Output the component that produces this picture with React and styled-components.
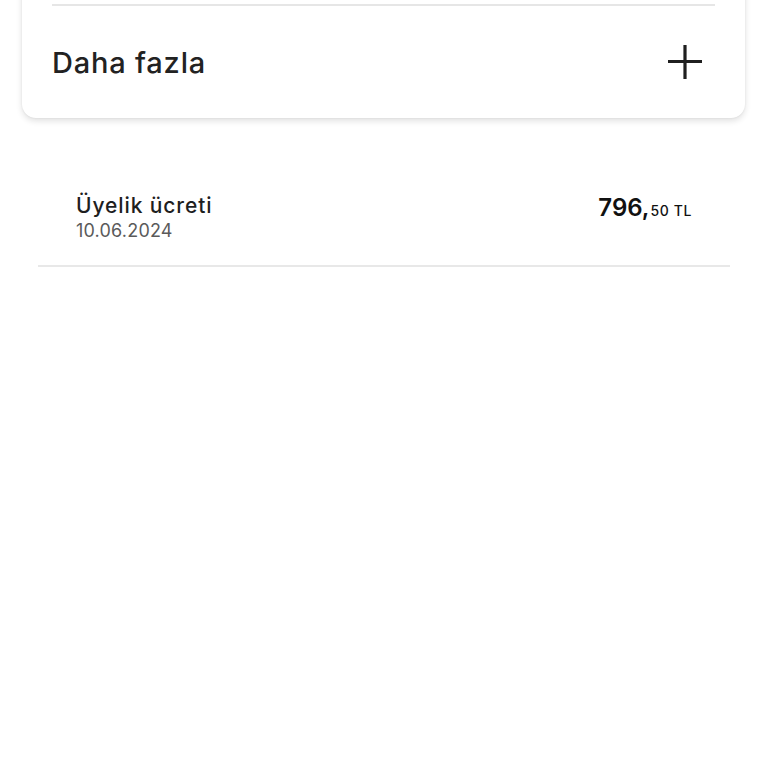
import React from "react";
import styled, { createGlobalStyle } from "styled-components";

const GlobalStyle = createGlobalStyle`
    body {
        margin: 0;
        background: #ffffff;
        font-family: Inter, "Noto Sans", sans-serif;
        color: #1c1c1c;
    }
`;

function PlusIcon() {
    return (
        <svg width="36" height="36" viewBox="0 0 36 36">
            <path d="M18 1v34M1 17.5h34" stroke="#1f1f1f" strokeWidth="3.2" fill="none" />
        </svg>
    );
}

function App() {
    return (
        <Page>
            <GlobalStyle />
            <Card>
                <Divider />
                <MoreRow>
                    <MoreLabel>Daha fazla</MoreLabel>
                    <PlusIcon />
                </MoreRow>
            </Card>
            <List>
                <Transaction>
                    <Info>
                        <Title>Üyelik ücreti</Title>
                        <DateText>10.06.2024</DateText>
                    </Info>
                    <Amount>
                        <Whole>796,</Whole>
                        <Cents>50 TL</Cents>
                    </Amount>
                </Transaction>
            </List>
        </Page>
    );
}

export default App;

const Page = styled.div`
    overflow: hidden;
    min-height: 768px;
`;

const Card = styled.div`
    margin: -30px 23px 0 22px;
    padding: 34px 30px 0;
    background: #ffffff;
    border-radius: 0 0 14px 14px;
    box-shadow: 0 3px 6px rgba(0, 0, 0, 0.12), 0 0 2px rgba(0, 0, 0, 0.08);
`;

const Divider = styled.div`
    height: 2px;
    background: #e6e6e6;
`;

const MoreRow = styled.div`
    display: flex;
    align-items: center;
    justify-content: space-between;
    height: 112px;
    padding-right: 12px;
`;

const MoreLabel = styled.span`
    font-size: 29px;
    font-weight: 500;
    letter-spacing: 0.8px;
    color: #222222;
`;

const List = styled.div`
    margin: 50px 38px 0;
`;

const Transaction = styled.div`
    display: flex;
    justify-content: space-between;
    align-items: flex-start;
    padding: 24px 38px 22px;
    border-bottom: 2px solid #e8e8e8;
`;

const Info = styled.div`
    display: flex;
    flex-direction: column;
`;

const Title = styled.span`
    font-size: 21px;
    line-height: 27px;
    font-weight: 500;
    letter-spacing: 0.9px;
    color: #1e1e1e;
`;

const DateText = styled.span`
    font-size: 18px;
    line-height: 24px;
    letter-spacing: 0.2px;
    color: #5a5a5a;
`;

const Amount = styled.div`
    display: flex;
    align-items: baseline;
    margin-top: 1px;
`;

const Whole = styled.span`
    font-size: 24px;
    font-weight: 600;
    color: #111111;
`;

const Cents = styled.span`
    font-size: 14px;
    font-weight: 500;
    letter-spacing: 0.6px;
    margin-left: 1px;
    color: #111111;
`;
